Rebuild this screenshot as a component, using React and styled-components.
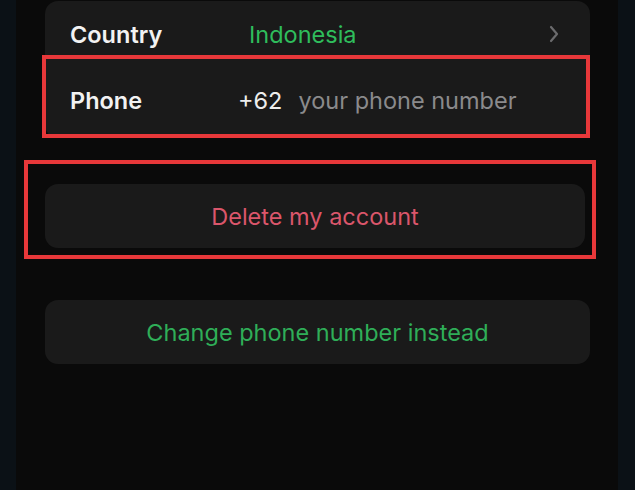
import styled, { createGlobalStyle } from "styled-components";

const GlobalStyle = createGlobalStyle`
  html, body {
    margin: 0;
    padding: 0;
    background: #0b1116;
  }
  body {
    font-family: Inter, "Noto Sans", "Liberation Sans", sans-serif;
    -webkit-font-smoothing: antialiased;
  }
`;

export default function App() {
  return (
    <>
      <GlobalStyle />
      <Page>
        <Screen>
          <Card>
            <Row>
              <Label>Country</Label>
              <CountryValue>Indonesia</CountryValue>
              <Chevron viewBox="0 0 10 18" aria-hidden="true">
                <path d="M2 2l6 7-6 7" />
              </Chevron>
            </Row>
            <Marked $top={-12} $right={0} $bottom={-5} $left={-3}>
              <Row>
                <Label>Phone</Label>
                <Code>+62</Code>
                <Placeholder>your phone number</Placeholder>
              </Row>
            </Marked>
          </Card>

          <Marked $gap={46} $top={-24} $right={-6} $bottom={-11} $left={-21}>
            <ActionButton $color="#da566b" $inset={5}>Delete my account</ActionButton>
          </Marked>

          <Spaced $gap={52}>
            <ActionButton $color="#2fae58">Change phone number instead</ActionButton>
          </Spaced>
        </Screen>
      </Page>
    </>
  );
}

const Page = styled.div`
  height: 490px;
  padding: 0 17px 0 16px;
  box-sizing: border-box;
  overflow: hidden;
`;

const Screen = styled.div`
  height: 100%;
  background: #0a0a0a;
  padding: 1px 28px 0 29px;
  box-sizing: border-box;
  display: flex;
  flex-direction: column;
`;

const Card = styled.div`
  background: #1a1a1a;
  border-radius: 13px;
  display: flex;
  flex-direction: column;
  padding-bottom: 5px;
`;

const Row = styled.div`
  height: 66px;
  display: flex;
  align-items: center;
  padding: 0 25px;
`;

const Label = styled.span`
  width: 168px;
  flex-shrink: 0;
  color: #f2f2f2;
  font-size: 23.5px;
  font-weight: 600;
`;

const CountryValue = styled.span`
  margin-left: 11px;
  flex: 1;
  color: #2fbd5c;
  font-size: 23.5px;
`;

const Chevron = styled.svg`
  width: 10px;
  height: 18px;
  margin-right: 6px;
  fill: none;
  stroke: #6b6b6d;
  stroke-width: 2.2;
  stroke-linecap: round;
  stroke-linejoin: round;
`;

const Code = styled.span`
  color: #ededed;
  font-size: 23.5px;
  margin-right: 16px;
`;

const Placeholder = styled.span`
  color: #8a8a8c;
  font-size: 23.5px;
`;

const Spaced = styled.div`
  margin-top: ${(p) => p.$gap || 0}px;
`;

const Marked = styled(Spaced)`
  position: relative;

  &::after {
    content: "";
    position: absolute;
    top: ${(p) => p.$top}px;
    right: ${(p) => p.$right}px;
    bottom: ${(p) => p.$bottom}px;
    left: ${(p) => p.$left}px;
    border: 4px solid #e8383a;
    pointer-events: none;
  }
`;

const ActionButton = styled.div`
  height: 64px;
  margin-right: ${(p) => p.$inset || 0}px;
  background: #1a1a1a;
  border-radius: 13px;
  display: flex;
  align-items: center;
  justify-content: center;
  color: ${(p) => p.$color};
  font-size: 23.5px;
`;
